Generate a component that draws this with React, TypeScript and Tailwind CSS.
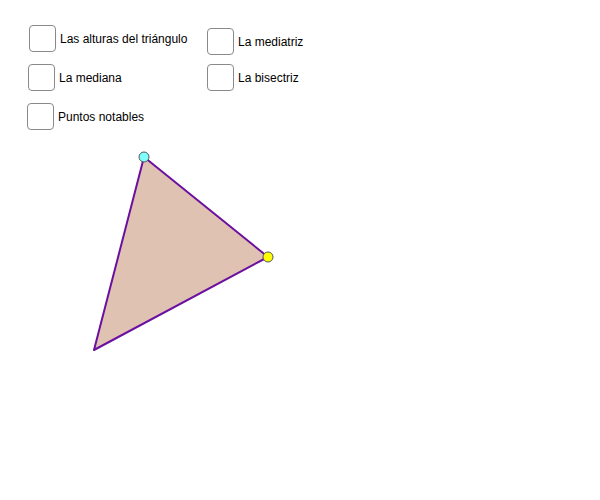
import React, { useState } from 'react';

interface Option {
  id: string;
  label: string;
  x: number;
  y: number;
}

// posiciones en el lienzo libre (tipo applet)
const options: Option[] = [
  { id: 'alturas', label: 'Las alturas del triángulo', x: 29, y: 25 },
  { id: 'mediatriz', label: 'La mediatriz', x: 207, y: 28 },
  { id: 'mediana', label: 'La mediana', x: 28, y: 64 },
  { id: 'bisectriz', label: 'La bisectriz', x: 207, y: 64 },
  { id: 'puntos', label: 'Puntos notables', x: 27, y: 103 },
];

const App = () => {
  const [checked, setChecked] = useState<Record<string, boolean>>({});

  const toggle = (id: string) => {
    setChecked(prev => ({ ...prev, [id]: !prev[id] }));
  };

  return (
    <div className="relative w-[600px] h-[500px] bg-white overflow-hidden font-['Liberation_Sans',Arial,sans-serif]">
      <svg className="absolute inset-0" width={600} height={500}>
        <polygon
          points="144,157 268,257 94,350"
          fill="#e0c2b3"
          stroke="#6b0fa0"
          strokeWidth={2}
          strokeLinejoin="round"
        />
        <circle cx={144} cy={157} r={5} fill="#80ffff" stroke="#555" strokeWidth={1} />
        <circle cx={268} cy={257} r={5} fill="#ffff00" stroke="#555" strokeWidth={1} />
      </svg>
      {options.map(opt => (
        <label
          key={opt.id}
          className="absolute flex items-center gap-[4px] cursor-pointer select-none"
          style={{ left: opt.x, top: opt.y }}
          onClick={() => toggle(opt.id)}
        >
          <span className="w-[27px] h-[27px] rounded-[4px] border border-[#8a8a8a] bg-white flex items-center justify-center">
            {checked[opt.id] && (
              <svg width={16} height={16} viewBox="0 0 16 16">
                <path d="M3 8l3 3 7-7" fill="none" stroke="#333" strokeWidth={2} />
              </svg>
            )}
          </span>
          <span className="text-[12px] text-black leading-none">{opt.label}</span>
        </label>
      ))}
    </div>
  );
};

export default App;
